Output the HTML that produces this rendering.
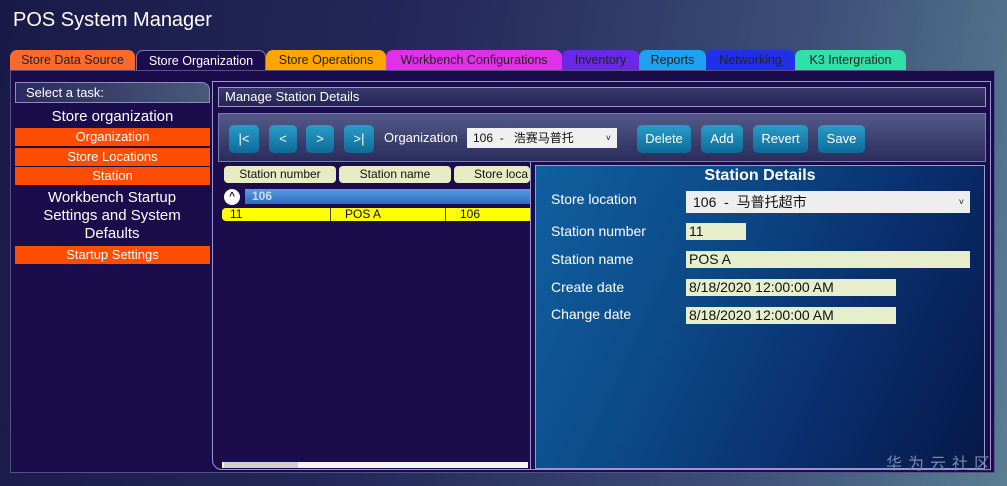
<!DOCTYPE html>
<html><head><meta charset="utf-8"><style>
*{margin:0;padding:0;box-sizing:border-box}
body{width:1007px;height:486px;overflow:hidden;position:relative;font-family:"Liberation Sans","Noto Sans CJK SC",sans-serif;
background:linear-gradient(100deg,#1a1a48 0%,#24285a 40%,#3c4f78 75%,#5a7e92 100%);color:#fff}
.a{position:absolute}
.tab{position:absolute;top:50px;height:20px;font-size:12.5px;line-height:20px;text-align:center;border-radius:7px 7px 0 0;color:#222}
.or{background:#ff4d00;color:#fff;font-size:13px;text-align:center;line-height:18px;height:18px;left:15px;width:195px}
.nb{position:absolute;top:125px;height:28px;border-radius:5px;background:linear-gradient(#2a9cc8,#0e6b98);color:#fff;font-size:13px;text-align:center;line-height:27px}
.gh{position:absolute;top:166px;height:17px;background:#e6ebc4;color:#111;font-size:12px;line-height:16px;text-align:center;border-radius:4px;overflow:hidden}
.lb{position:absolute;left:551px;font-size:14px;color:#fff}
.fd{position:absolute;left:686px;background:#e6eecb;color:#111;font-size:14px;padding-left:3px;line-height:17px;height:17px}
</style></head><body>
<div class="a" style="left:13px;top:9px;font-size:20px">POS System Manager</div>
<div class="tab" style="left:10px;width:125px;background:#ff6a2a">Store Data Source</div>
<div class="tab" style="left:136px;width:130px;background:#1b0c4c;color:#fff;border:1px solid #7a7aa8;border-bottom:none">Store Organization</div>
<div class="tab" style="left:266px;width:120px;background:#ffa500">Store Operations</div>
<div class="tab" style="left:386px;width:176px;background:#e030e8">Workbench Configurations</div>
<div class="tab" style="left:562px;width:77px;background:#6a28e8">Inventory</div>
<div class="tab" style="left:639px;width:67px;background:#20a0f0">Reports</div>
<div class="tab" style="left:706px;width:89px;background:#2030e8">Networking</div>
<div class="tab" style="left:795px;width:111px;background:#30e0a8">K3 Intergration</div>
<div class="a" style="left:10px;top:70px;width:985px;height:403px;background:#1b0c4c;border:1px solid #55508a"></div>
<div class="a" style="left:15px;top:82px;width:195px;height:21px;background:linear-gradient(90deg,#2a2a5e,#4a5a7a);border:1px solid #8890b8;border-radius:0 8px 0 0;font-size:13px;line-height:19px;padding-left:10px">Select a task:</div>
<div class="a" style="left:15px;top:108px;width:195px;text-align:center;font-size:15px">Store organization</div>
<div class="a or" style="top:128px">Organization</div>
<div class="a or" style="top:148px">Store Locations</div>
<div class="a or" style="top:167px">Station</div>
<div class="a" style="left:27px;top:189px;width:170px;text-align:center;font-size:15px;line-height:18px">Workbench Startup Settings and System Defaults</div>
<div class="a or" style="top:246px">Startup Settings</div>
<div class="a" style="left:212px;top:81px;width:779px;height:389px;border:1px solid #9a98d0;border-radius:0 0 0 10px"></div>
<div class="a" style="left:218px;top:87px;width:768px;height:20px;background:linear-gradient(#3a3a70,#232354);border:1px solid #9a9ad0;font-size:13px;line-height:18px;padding-left:6px">Manage Station Details</div>
<div class="a" style="left:218px;top:113px;width:768px;height:49px;background:linear-gradient(#545a88,#2a2c5c);border:1px solid #7a7ab8"></div>
<div class="nb" style="left:229px;width:30px">|&lt;</div>
<div class="nb" style="left:269px;width:28px">&lt;</div>
<div class="nb" style="left:306px;width:28px">&gt;</div>
<div class="nb" style="left:344px;width:30px">&gt;|</div>
<div class="a" style="left:384px;top:130px;font-size:13px">Organization</div>
<div class="a" style="left:467px;top:128px;width:150px;height:20px;background:#f0f0f0;color:#111;font-size:12px;line-height:20px;padding-left:6px">106&nbsp; -&nbsp;&nbsp; 浩赛马普托<span style="position:absolute;right:6px;font-size:9px">˅</span></div>
<div class="nb" style="left:637px;width:54px">Delete</div>
<div class="nb" style="left:701px;width:42px">Add</div>
<div class="nb" style="left:753px;width:55px">Revert</div>
<div class="nb" style="left:818px;width:47px">Save</div>
<div class="gh" style="left:224px;width:112px">Station number</div>
<div class="gh" style="left:339px;width:112px">Station name</div>
<div class="gh" style="left:454px;width:76px;text-align:left;padding-left:20px">Store loca</div>
<div class="a" style="left:224px;top:189px;width:16px;height:16px;border-radius:50%;background:#fff;color:#111;font-size:10px;text-align:center;line-height:16px;font-weight:bold">^</div>
<div class="a" style="left:245px;top:189px;width:285px;height:15px;background:linear-gradient(#5a9ce0,#2a6cc0);font-size:12px;font-weight:bold;line-height:15px;padding-left:7px;color:#cde">106</div>
<div class="a" style="left:222px;top:208px;width:308px;height:13px;background:#ffff00;color:#111;font-size:12px;line-height:13px;border-radius:4px 0 0 4px">
<span class="a" style="left:8px">11</span><span class="a" style="left:108px;border-left:1px solid #444;height:13px"></span><span class="a" style="left:123px">POS A</span><span class="a" style="left:223px;border-left:1px solid #444;height:13px"></span><span class="a" style="left:238px">106</span></div>
<div class="a" style="left:222px;top:462px;width:306px;height:6px;background:#f4f4f4"></div>
<div class="a" style="left:224px;top:462px;width:74px;height:6px;background:#d0d0d0"></div>
<div class="a" style="left:530px;top:162px;width:1px;height:308px;background:#9a98d0"></div>
<div class="a" style="left:535px;top:165px;width:450px;height:304px;border:1px solid #9a98d0;background:linear-gradient(115deg,#1060a0 0%,#0c4a88 35%,#0a3070 65%,#061848 100%)"></div>
<div class="a" style="left:535px;top:167px;width:450px;text-align:center;font-size:16px;font-weight:bold">Station Details</div>
<div class="lb" style="top:191px">Store location</div>
<div class="lb" style="top:223px">Station number</div>
<div class="lb" style="top:251px">Station name</div>
<div class="lb" style="top:279px">Create date</div>
<div class="lb" style="top:306px">Change date</div>
<div class="a" style="left:686px;top:191px;width:284px;height:22px;background:#eee;color:#111;font-size:14px;line-height:22px;padding-left:7px">106&nbsp; -&nbsp; 马普托超市<span style="position:absolute;right:6px;font-size:9px">˅</span></div>
<div class="fd" style="top:223px;width:60px">11</div>
<div class="fd" style="top:251px;width:284px">POS A</div>
<div class="fd" style="top:279px;width:210px">8/18/2020 12:00:00 AM</div>
<div class="fd" style="top:307px;width:210px">8/18/2020 12:00:00 AM</div>
<div class="a" style="left:886px;top:450px;font-size:16px;color:#7a8aa8;letter-spacing:6px">华为云社区</div>
</body></html>
